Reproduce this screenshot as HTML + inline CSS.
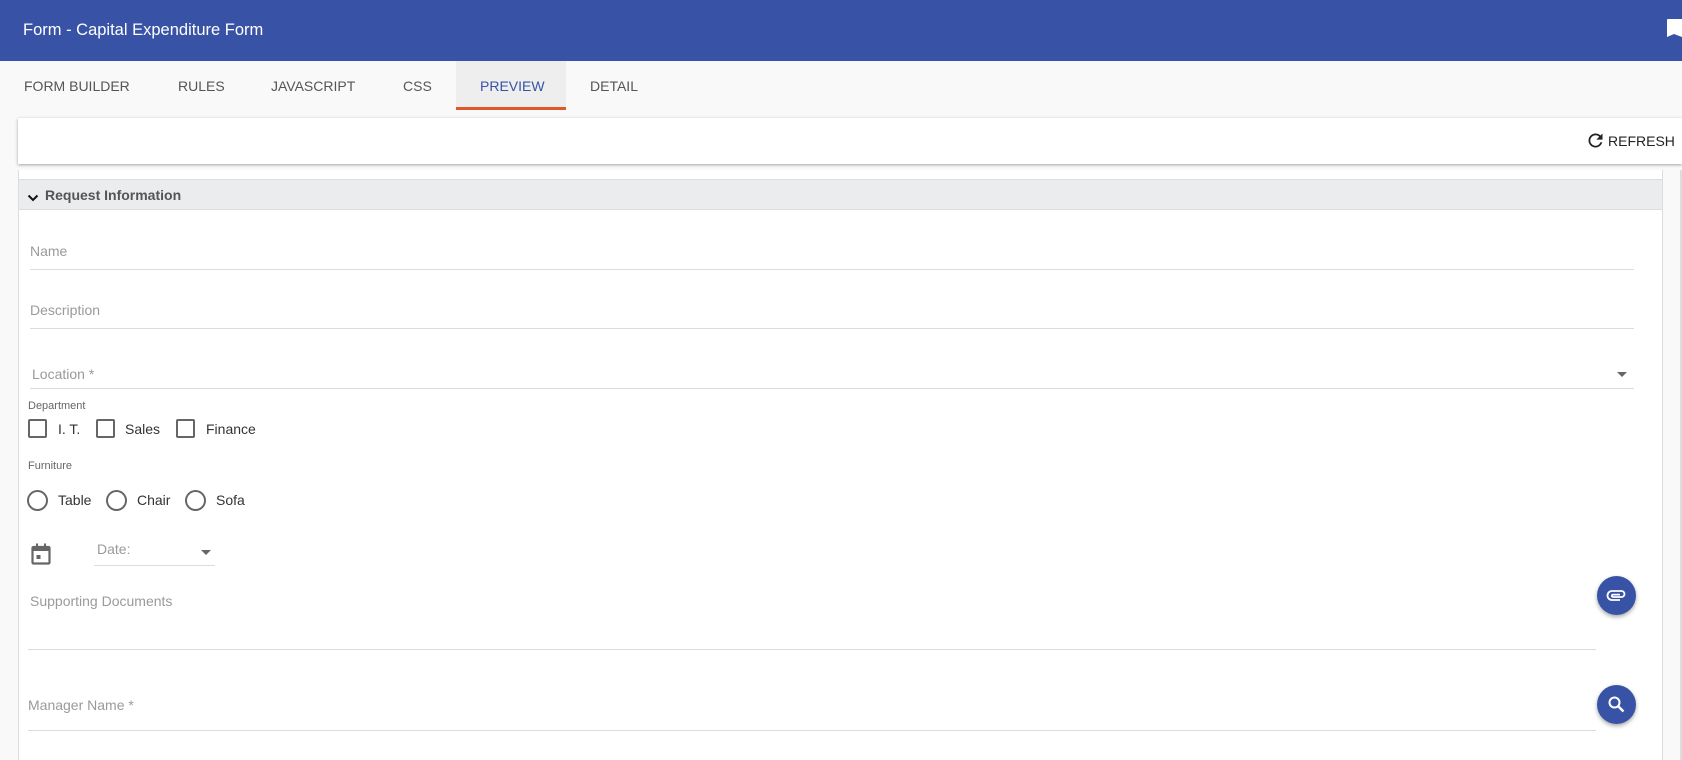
<!DOCTYPE html>
<html><head><meta charset="utf-8"><style>
*{box-sizing:border-box;margin:0;padding:0}
body{width:1682px;height:755px;overflow:hidden;background:#f9f9f9;font-family:"Liberation Sans",sans-serif;position:relative;color:#333}
.abs{position:absolute}
.hdr{left:0;top:0;width:1682px;height:61px;background:#3853a6;color:#fff;font-size:16.5px}
.tab{position:absolute;top:78px;font-size:14px;color:#555}
.lbl{position:absolute;color:#9a9a9a;font-size:14px}
.line{position:absolute;height:1px;background:#dcdcdc}
.sm{position:absolute;font-size:11px;color:#666}
.cb{position:absolute;width:19px;height:19px;border:2px solid #666;border-radius:2px}
.rd{position:absolute;width:21px;height:21px;border:2px solid #666;border-radius:50%}
.opt{position:absolute;font-size:14px;color:#333}
.fab{position:absolute;width:39px;height:39px;border-radius:50%;background:#3853a6;box-shadow:0 2px 4px rgba(0,0,0,.35)}
</style></head><body>
<div class="abs hdr"><span style="position:absolute;left:23px;top:21px">Form - Capital Expenditure Form</span>
<svg style="position:absolute;left:1667px;top:19px" width="15" height="19" viewBox="0 0 15 19"><path d="M0 1 Q0 0 1 0 H15 V18 L7 15 L0 18 Z" fill="#fff"/></svg></div>
<div class="abs" style="left:456px;top:61px;width:110px;height:49px;background:#eeeeee"></div>
<div class="abs" style="left:456px;top:107px;width:110px;height:3px;background:#e0582a"></div>
<span class="tab" style="left:24px">FORM BUILDER</span>
<span class="tab" style="left:178px">RULES</span>
<span class="tab" style="left:271px">JAVASCRIPT</span>
<span class="tab" style="left:403px">CSS</span>
<span class="tab" style="left:480px;color:#3853a6">PREVIEW</span>
<span class="tab" style="left:590px">DETAIL</span>
<div class="abs" style="left:18px;top:118px;width:1664px;height:46px;background:#fff;box-shadow:0 1px 3px rgba(0,0,0,.35)"></div>
<svg class="abs" style="left:1585px;top:130px" width="21" height="21" viewBox="0 0 24 24"><path d="M17.65 6.35A7.96 7.96 0 0 0 12 4a8 8 0 1 0 7.74 10h-2.08A6 6 0 1 1 12 6c1.66 0 3.14.69 4.22 1.78L13 11h7V4l-2.35 2.35z" fill="#222"/></svg>
<span class="abs" style="left:1608px;top:133px;font-size:14px;color:#222">REFRESH</span>
<div class="abs" style="left:18px;top:170px;width:1645px;height:590px;background:#fff;border-left:1px solid #ddd;border-right:1px solid #ddd"></div>
<div class="abs" style="left:1680px;top:170px;width:2px;height:590px;background:#ddd"></div>
<div class="abs" style="left:18px;top:179px;width:1645px;height:31px;background:#ebeced;border:1px solid #ddd"></div>
<svg class="abs" style="left:27px;top:194px" width="12" height="9" viewBox="0 0 12 9"><path d="M1.5 1.5 L6 6 L10.5 1.5" stroke="#111" stroke-width="2" fill="none"/></svg>
<span class="abs" style="left:45px;top:187px;font-size:14px;font-weight:bold;color:#555">Request Information</span>
<span class="lbl" style="left:30px;top:243px">Name</span><div class="line" style="left:30px;top:269px;width:1604px"></div>
<span class="lbl" style="left:30px;top:302px">Description</span><div class="line" style="left:30px;top:328px;width:1604px"></div>
<span class="lbl" style="left:32px;top:366px">Location *</span><div class="line" style="left:30px;top:388px;width:1604px"></div>
<svg class="abs" style="left:1617px;top:372px" width="10" height="5"><path d="M0 0 L10 0 L5 5Z" fill="#666"/></svg>
<span class="sm" style="left:28px;top:400px">Department</span>
<div class="cb" style="left:28px;top:419px"></div><span class="opt" style="left:58px;top:421px">I. T.</span>
<div class="cb" style="left:96px;top:419px"></div><span class="opt" style="left:125px;top:421px">Sales</span>
<div class="cb" style="left:176px;top:419px"></div><span class="opt" style="left:206px;top:421px">Finance</span>
<span class="sm" style="left:28px;top:460px">Furniture</span>
<div class="rd" style="left:27px;top:490px"></div><span class="opt" style="left:58px;top:492px">Table</span>
<div class="rd" style="left:106px;top:490px"></div><span class="opt" style="left:137px;top:492px">Chair</span>
<div class="rd" style="left:185px;top:490px"></div><span class="opt" style="left:216px;top:492px">Sofa</span>
<svg class="abs" style="left:31px;top:543px" width="20" height="22" viewBox="0 0 20 22"><rect x="1.5" y="4" width="17" height="16.5" rx="1" fill="none" stroke="#666" stroke-width="2.2"/><rect x="1.5" y="4" width="17" height="4" fill="#666"/><rect x="5" y="0.5" width="2" height="4" fill="#666"/><rect x="13" y="0.5" width="2" height="4" fill="#666"/><rect x="5.5" y="12" width="4" height="4" fill="#666"/></svg>
<span class="lbl" style="left:97px;top:541px">Date:</span><div class="line" style="left:94px;top:565px;width:121px"></div>
<svg class="abs" style="left:201px;top:550px" width="10" height="5"><path d="M0 0 L10 0 L5 5Z" fill="#666"/></svg>
<span class="lbl" style="left:30px;top:593px">Supporting Documents</span><div class="line" style="left:28px;top:649px;width:1568px"></div>
<div class="fab" style="left:1597px;top:576px"><svg style="position:absolute;left:9px;top:12px" width="21" height="15" viewBox="0 0 21 15"><path d="M14 12 H6 a4.5 4.5 0 0 1 0-9 H15.5 a3 3 0 0 1 0 6 H7 a1.2 1.2 0 0 1 0-2.4 H14" stroke="#fff" stroke-width="1.8" fill="none"/></svg></div>
<span class="lbl" style="left:28px;top:697px">Manager Name *</span><div class="line" style="left:28px;top:730px;width:1568px"></div>
<div class="fab" style="left:1597px;top:685px"><svg style="position:absolute;left:10px;top:10px" width="19" height="19" viewBox="0 0 19 19"><circle cx="7.5" cy="7.5" r="5" stroke="#fff" stroke-width="2" fill="none"/><path d="M11 11 L16.5 16.5" stroke="#fff" stroke-width="2.4"/></svg></div>
</body></html>
